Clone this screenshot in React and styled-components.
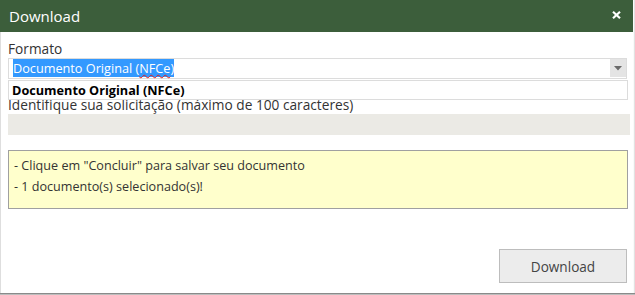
import React from "react";
import styled, { createGlobalStyle } from "styled-components";

const Global = createGlobalStyle`
  html, body { margin: 0; padding: 0; }
  body {
    width: 635px;
    height: 295px;
    overflow: hidden;
    background: #ececec;
    font-family: "Open Sans", "Noto Sans", sans-serif;
  }
`;

const Page = styled.div`
  display: flex;
  flex-direction: column;
  width: 635px;
  height: 295px;
`;

const Row = styled.div`
  display: flex;
  height: 293px;
`;

const Dialog = styled.div`
  width: 633px;
  display: flex;
  flex-direction: column;
  background: #fff;
`;

const SideStrip = styled.div`
  flex: 1;
  background: linear-gradient(to right, #fafafa 0 1px, #e2e2e2 1px);
`;

const BottomStrip = styled.div`
  height: 2px;
  background: linear-gradient(to bottom, #8a8a8a 0 1px, #bdbdbd 1px);
`;

const Header = styled.div`
  height: 32px;
  flex: none;
  background: #3c5e3b;
  color: #fff;
  display: flex;
  align-items: center;
  justify-content: space-between;
  padding: 0 12px 0 9px;
`;

const Title = styled.span`
  font-size: 15px;
  line-height: 20px;
  margin-top: -1px;
`;

const CloseIcon = styled.svg`
  display: block;
  margin-bottom: 2px;
`;

const Body = styled.div`
  flex: 1;
  display: flex;
  flex-direction: column;
  border-left: 1px solid #dedede;
  padding: 8px 3px 0 7px;
`;

const Label = styled.div`
  font-size: 13.7px;
  line-height: 18px;
  color: #333;
  margin-top: ${(p) => p.$mt || 0}px;
  white-space: nowrap;
`;

const SelectWrap = styled.div`
  position: relative;
  margin-right: 3px;
`;

const SelectBox = styled.div`
  box-sizing: border-box;
  height: 21px;
  border: 1px solid #dcdcdc;
  display: flex;
  align-items: center;
  padding-left: 4px;
  font-size: 12.7px;
  line-height: 19px;
`;

const SelectText = styled.div`
  flex: 1;
`;

const Highlight = styled.span`
  background: #3399ff;
  color: #fff;
`;

const Squiggle = styled.span`
  text-decoration: underline wavy #e02020;
  text-decoration-thickness: 1px;
  text-underline-offset: 1px;
`;

const ArrowBox = styled.div`
  align-self: flex-start;
  width: 16px;
  height: 18px;
  background: #e4e4e4;
  display: flex;
  align-items: center;
  justify-content: center;
`;

const Menu = styled.div`
  position: absolute;
  top: calc(100% + 1px);
  left: 0;
  right: -1px;
  box-sizing: border-box;
  height: 20px;
  border: 1px solid #dcdcdc;
  background: #fff;
  padding-left: 3px;
  font-size: 12.7px;
  line-height: 18px;
  font-weight: 700;
  color: #000;
  z-index: 2;
`;

const GrayInput = styled.div`
  height: 21px;
  background: #ebeae5;
`;

const Notice = styled.div`
  margin: 15px 2px 0 0;
  border: 1px solid #a0a0a0;
  background: #ffffcc;
  padding: 4px 5px 11px;
  font-size: 12.6px;
  line-height: 21px;
  color: #333;
`;

const Footer = styled.div`
  display: flex;
  justify-content: flex-end;
  margin-top: 40px;
  padding-right: 3px;
`;

const Button = styled.button`
  box-sizing: border-box;
  width: 128px;
  height: 34px;
  background: #ececec;
  border: 1px solid #bdbdbd;
  font-family: inherit;
  font-size: 13.6px;
  color: #444;
  padding: 0;
`;

export default function App() {
  return (
    <Page>
      <Global />
      <Row>
        <Dialog>
          <Header>
            <Title>Download</Title>
            <CloseIcon width="9" height="8" viewBox="0 0 9 8">
              <path d="M1 0.8 L8 7.2 M8 0.8 L1 7.2" stroke="#fff" strokeWidth="2.2" />
            </CloseIcon>
          </Header>
          <Body>
            <Label>Formato</Label>
            <SelectWrap>
              <SelectBox>
                <SelectText>
                  <Highlight>
                    Documento Original (<Squiggle>NFCe</Squiggle>)
                  </Highlight>
                </SelectText>
                <ArrowBox>
                  <svg width="8" height="5" viewBox="0 0 8 5">
                    <path d="M0 0 H8 L4 4.5 Z" fill="#6a6a6a" />
                  </svg>
                </ArrowBox>
              </SelectBox>
              <Menu>Documento Original (NFCe)</Menu>
            </SelectWrap>
            <Label $mt={17}>Identifique sua solicitação (máximo de 100 caracteres)</Label>
            <GrayInput />
            <Notice>
              <div>- Clique em "Concluir" para salvar seu documento</div>
              <div>- 1 documento(s) selecionado(s)!</div>
            </Notice>
            <Footer>
              <Button>Download</Button>
            </Footer>
          </Body>
        </Dialog>
        <SideStrip />
      </Row>
      <BottomStrip />
    </Page>
  );
}
